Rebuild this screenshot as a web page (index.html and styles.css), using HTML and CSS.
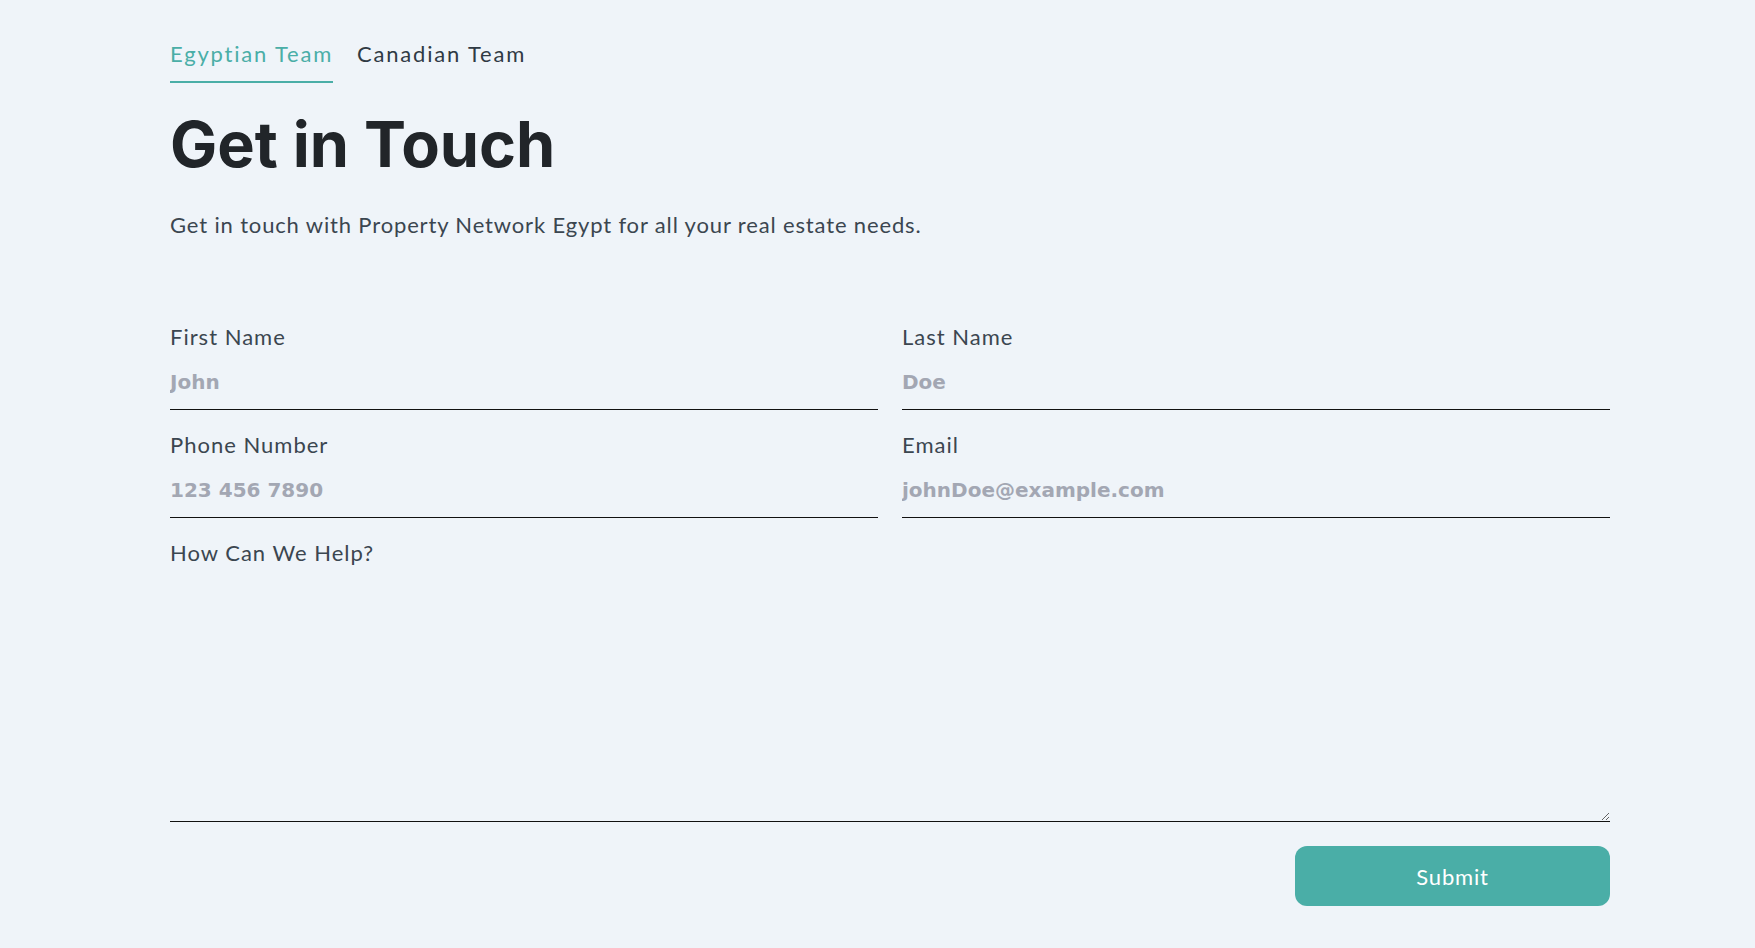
FILE: index.html
```html
<!DOCTYPE html>
<html lang="en">
<head>
<meta charset="utf-8">
<title>Get in Touch</title>
<link rel="stylesheet" href="styles.css">
</head>
<body>
<main class="page">
  <nav class="tabs">
    <a class="tab tab-active" href="#">Egyptian Team</a>
    <a class="tab" href="#">Canadian Team</a>
  </nav>
  <h1 class="title">Get in Touch</h1>
  <p class="subtitle">Get in touch with Property Network Egypt for all your real estate needs.</p>
  <form class="form">
    <div class="grid">
      <div class="field">
        <label class="label" for="fn">First Name</label>
        <input class="input" id="fn" type="text" placeholder="John">
      </div>
      <div class="field">
        <label class="label" for="ln">Last Name</label>
        <input class="input" id="ln" type="text" placeholder="Doe">
      </div>
      <div class="field">
        <label class="label" for="ph">Phone Number</label>
        <input class="input" id="ph" type="tel" placeholder="123 456 7890">
      </div>
      <div class="field">
        <label class="label" for="em">Email</label>
        <input class="input" id="em" type="email" placeholder="johnDoe@example.com">
      </div>
      <div class="field field-wide">
        <label class="label" for="msg">How Can We Help?</label>
        <textarea class="textarea" id="msg"></textarea>
      </div>
    </div>
    <div class="actions">
      <button class="submit" type="button">Submit</button>
    </div>
  </form>
</main>
</body>
</html>
```
FILE: styles.css
```css
* { box-sizing: border-box; }
html, body {
  margin: 0;
  background: #eff4f9;
}
body {
  font-family: Lato, "Noto Sans", sans-serif;
  color: #3b4650;
  font-size: 22px;
}
.page {
  width: 1440px;
  margin-left: 170px;
  padding-top: 37px;
}
.tabs {
  display: flex;
  gap: 24px;
}
.tab {
  display: block;
  font-size: 22px;
  line-height: 33px;
  letter-spacing: 1.8px;
  padding-bottom: 11px;
  border-bottom: 2px solid transparent;
  color: #2f3a44;
  text-decoration: none;
}
.tab-active {
  color: #4aaea7;
  border-bottom-color: #4aaea7;
}
.title {
  margin: 22px 0 0;
  font-family: Inter, Roboto, "Liberation Sans", sans-serif;
  font-weight: 700;
  font-size: 63px;
  line-height: 78px;
  letter-spacing: 0;
  color: #212529;
}
.subtitle {
  margin: 25px 0 0;
  font-size: 22px;
  line-height: 33px;
  letter-spacing: 0.85px;
  color: #3b4650;
}
.form {
  margin-top: 79px;
}
.grid {
  display: grid;
  grid-template-columns: 1fr 1fr;
  column-gap: 24px;
  row-gap: 18px;
}
.field {
  display: flex;
  flex-direction: column;
}
.field-wide {
  grid-column: 1 / -1;
}
.label {
  font-size: 22px;
  line-height: 33px;
  letter-spacing: 1px;
  color: #3b4650;
}
.input {
  height: 57px;
  padding: 2px 0 0;
  border: none;
  border-bottom: 1px solid #111;
  background: transparent;
  font-family: "DejaVu Sans", sans-serif;
  font-weight: 700;
  font-size: 20px;
  color: #3b4650;
  outline: none;
}
.input::placeholder {
  color: #a3a7b3;
}
.textarea {
  height: 253px;
  border: none;
  border-bottom: 1px solid #111;
  background: transparent;
  font-family: "DejaVu Sans", sans-serif;
  font-size: 22px;
  outline: none;
  resize: vertical;
}
.actions {
  display: flex;
  justify-content: flex-end;
  margin-top: 24px;
}
.submit {
  width: 315px;
  height: 60px;
  border: none;
  border-radius: 12px;
  background: #4aaea7;
  color: #ffffff;
  font-family: Lato, "Noto Sans", sans-serif;
  font-size: 22px;
  letter-spacing: 0.8px;
  cursor: pointer;
}
```
